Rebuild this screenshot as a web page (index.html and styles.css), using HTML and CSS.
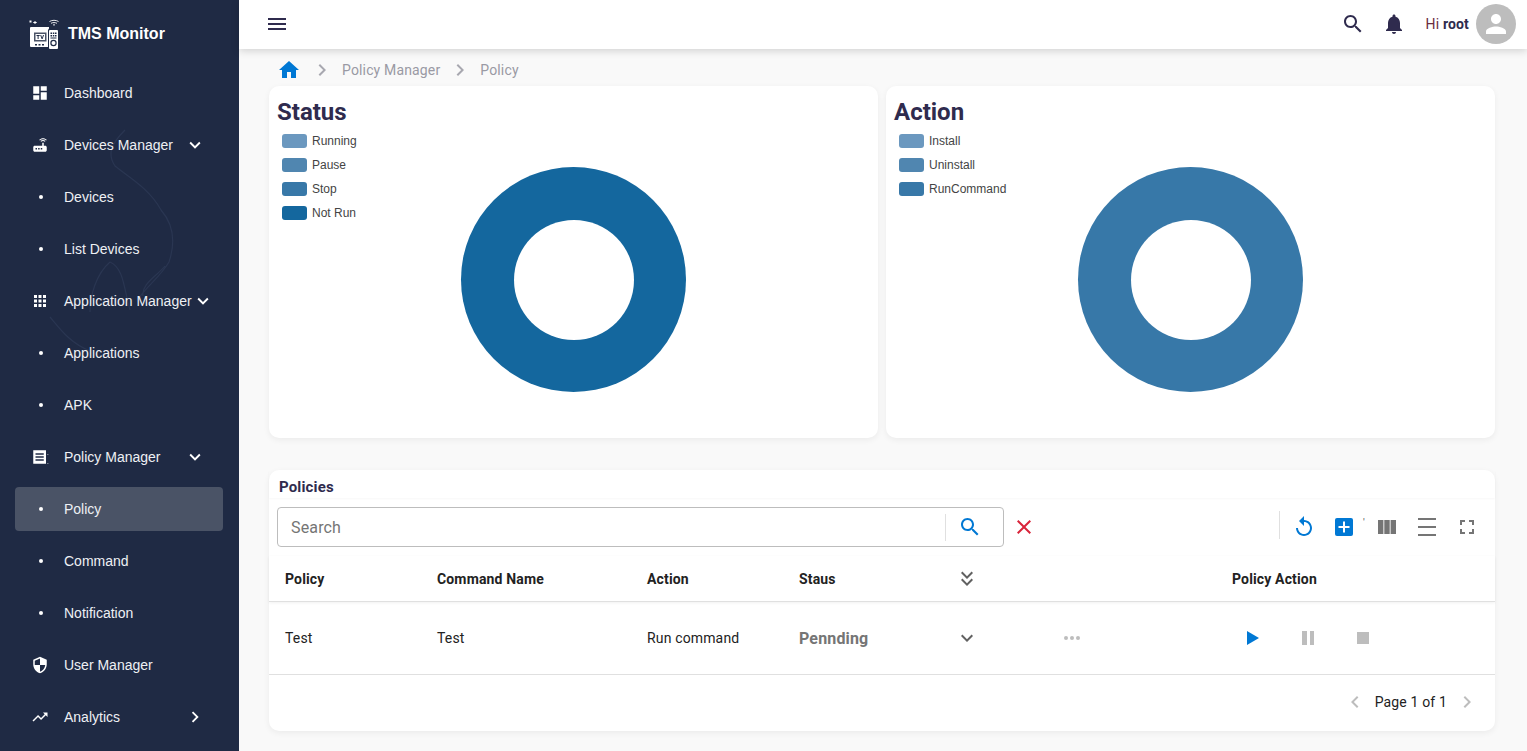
FILE: index.html
```html
<!DOCTYPE html>
<html lang="en">
<head>
<meta charset="utf-8">
<title>TMS Monitor</title>
<link rel="stylesheet" href="styles.css">
</head>
<body>
<div class="app">
  <aside class="sidebar">
    <svg class="side-art" viewBox="0 0 239 751" fill="none" stroke="#2a3652" stroke-width="1.2">
      <path d="M125 130c-14 14-18 24-10 36 12 10 34 22 46 44 14 16 14 34 8 52-8 14-22 24-30 36M110 262c-14 12-20 34-20 50M110 262c14 6 14 28 20 48M165 266c-8 10-24 18-22 30M50 317c10 12 20 26 40 34"/>
    </svg>
    <div class="brand">
      <svg class="brand-logo" viewBox="29 19 31 31" aria-hidden="true">
        <path fill="#fff" d="M29.500 20.500h2v2h-2zM34.500 21h1v1h1.200v1h-1.200v1h-1v-1h-1.200v-1h1.200z"/>
        <path fill="none" stroke="#fff" stroke-width=".9" d="M49.500 21.500c2.500-1.600 6.500-1.600 9 0M51 23.300c1.800-1 4.200-1 6 0M53 25c.6-.3 1.400-.3 2 0"/>
        <path fill="#fff" d="M30 28a1 1 0 0 1 1-1h18v1.500l-1 1.500v17H31a1 1 0 0 1-1-1z"/>
        <path fill="#4a5366" d="M34 32.500h12.500v9H34z"/>
        <path fill="#fff" d="M35.500 34h9.500v6h-9.500z"/>
        <path fill="#1f2a44" d="M36.500 35h3.200v.9h-1.100v3h-1v-3h-1.100zM40.200 35h1l.9 2.700.9-2.700h1l-1.400 3.900h-1zM35 44h2v1.500h-2zM38.500 44h2v1.500h-2zM42 44h2v1.500h-2z"/>
        <path fill="#fff" d="M50 30h7a1 1 0 0 1 1 1v17a1 1 0 0 1-1 1h-7a1 1 0 0 1-1-1V31a1 1 0 0 1 1-1z"/>
        <path fill="#1f2a44" d="M50.500 32.500h1.500V34h-1.500zM52.800 32.500h1.500V34h-1.500zM55 32.500h1.500V34H55zM50.500 35h1.500v1.500h-1.500zM52.800 35h1.500v1.500h-1.500zM55 35h1.500v1.500H55zM50.500 37.500h6v1h-6z"/>
        <circle cx="53.500" cy="43" r="2.600" fill="none" stroke="#1f2a44" stroke-width="1.200"/>
      </svg>
      <span class="brand-name">TMS Monitor</span>
    </div>
    <nav class="nav">
      <a class="nav-item"><span class="nav-icon"><svg viewBox="0 0 24 24"><path d="M3 13h8V3H3zm0 8h8v-6H3zm10 0h8V11h-8zm0-18v6h8V3z"/></svg></span><span class="nav-label">Dashboard</span></a>
      <a class="nav-item"><span class="nav-icon"><svg viewBox="0 0 24 24"><path d="M20.200 5.900l.8-.8C19.600 3.700 17.800 3 16 3s-3.600.7-5 2.100l.8.8C13 4.800 14.500 4.200 16 4.200s3 .6 4.200 1.700zm-.9.800c-.9-.9-2.100-1.400-3.300-1.400s-2.400.5-3.300 1.400l.8.8c.7-.7 1.600-1 2.500-1s1.800.3 2.500 1zM19 13h-2V9h-2v4H5c-1.100 0-2 .9-2 2v4c0 1.100.9 2 2 2h14c1.100 0 2-.9 2-2v-4c0-1.100-.9-2-2-2zM8 18H6v-2h2zm3.500 0h-2v-2h2zm3.500 0h-2v-2h2z"/></svg></span><span class="nav-label">Devices Manager</span><svg class="nav-chev" viewBox="0 0 24 24"><path d="M7.410 8.590 12 13.170l4.590-4.580L18 10l-6 6-6-6z"/></svg></a>
      <a class="nav-item"><span class="nav-icon"><i class="dot"></i></span><span class="nav-label">Devices</span></a>
      <a class="nav-item"><span class="nav-icon"><i class="dot"></i></span><span class="nav-label">List Devices</span></a>
      <a class="nav-item"><span class="nav-icon"><svg viewBox="0 0 24 24"><path d="M4 8h4V4H4zm6 12h4v-4h-4zm-6 0h4v-4H4zm0-6h4v-4H4zm6 0h4v-4h-4zm6-10v4h4V4zm-6 4h4V4h-4zm6 6h4v-4h-4zm0 6h4v-4h-4z"/></svg></span><span class="nav-label">Application Manager</span><svg class="nav-chev tight" viewBox="0 0 24 24"><path d="M7.410 8.590 12 13.170l4.590-4.580L18 10l-6 6-6-6z"/></svg></a>
      <a class="nav-item"><span class="nav-icon"><i class="dot"></i></span><span class="nav-label">Applications</span></a>
      <a class="nav-item"><span class="nav-icon"><i class="dot"></i></span><span class="nav-label">APK</span></a>
      <a class="nav-item"><span class="nav-icon"><svg viewBox="0 0 24 24"><path fill-rule="evenodd" d="M3 3h17v18H3zM6 7v2h11V7zM6 11v2h11v-2zM6 15v2h11v-2z"/><path d="M22 8h1v1h-1zM22 20h1v1h-1z"/></svg></span><span class="nav-label">Policy Manager</span><svg class="nav-chev" viewBox="0 0 24 24"><path d="M7.410 8.590 12 13.170l4.590-4.580L18 10l-6 6-6-6z"/></svg></a>
      <a class="nav-item active"><span class="nav-icon"><i class="dot"></i></span><span class="nav-label">Policy</span></a>
      <a class="nav-item"><span class="nav-icon"><i class="dot"></i></span><span class="nav-label">Command</span></a>
      <a class="nav-item"><span class="nav-icon"><i class="dot"></i></span><span class="nav-label">Notification</span></a>
      <a class="nav-item"><span class="nav-icon"><svg viewBox="0 0 24 24"><path d="M12 1 3 5v6c0 5.550 3.840 10.740 9 12 5.160-1.260 9-6.450 9-12V5zm0 10.990h7c-.53 4.120-3.280 7.790-7 8.940V12H5V6.300l7-3.110z"/></svg></span><span class="nav-label">User Manager</span></a>
      <a class="nav-item"><span class="nav-icon"><svg viewBox="0 0 24 24"><path d="m16 6 2.290 2.290-4.880 4.880-4-4L2 16.590 3.410 18l6-6 4 4 6.300-6.290L22 12V6z"/></svg></span><span class="nav-label">Analytics</span><svg class="nav-chev" viewBox="0 0 24 24"><path d="M10 6 8.590 7.410 13.170 12l-4.580 4.590L10 18l6-6z"/></svg></a>
    </nav>
  </aside>

  <div class="content">
    <header class="topbar">
      <svg class="menu-icon" viewBox="0 0 24 24"><path d="M3 18h18v-2H3zm0-5h18v-2H3zm0-7v2h18V6z"/></svg>
      <div class="top-right">
        <svg class="top-icon" viewBox="0 0 24 24"><path d="M15.500 14h-.79l-.28-.27C15.410 12.590 16 11.110 16 9.500 16 5.910 13.090 3 9.500 3S3 5.910 3 9.500 5.910 16 9.500 16c1.610 0 3.090-.59 4.230-1.570l.27.28v.79l5 4.990L20.490 19zm-6 0C7.010 14 5 11.990 5 9.500S7.010 5 9.500 5 14 7.010 14 9.500 11.990 14 9.500 14z"/></svg>
        <svg class="top-icon" viewBox="0 0 24 24"><path d="M12 22c1.100 0 2-.9 2-2h-4c0 1.100.89 2 2 2zm6-6v-5c0-3.070-1.640-5.640-4.500-6.320V4c0-.83-.67-1.500-1.500-1.500s-1.500.67-1.500 1.500v.68C7.630 5.360 6 7.920 6 11v5l-2 2v1h16v-1z"/></svg>
        <span class="greeting">Hi <b>root</b></span>
        <span class="avatar"><svg viewBox="0 0 24 24"><path d="M12 12c2.210 0 4-1.790 4-4s-1.790-4-4-4-4 1.790-4 4 1.790 4 4 4zm0 2c-2.670 0-8 1.340-8 4v2h16v-2c0-2.660-5.330-4-8-4z"/></svg></span>
      </div>
    </header>

    <main class="main">
      <div class="crumbs">
        <svg class="crumb-home" viewBox="0 0 24 24"><path d="M10 20v-6h4v6h5v-8h3L12 3 2 12h3v8z"/></svg>
        <svg class="crumb-sep" viewBox="0 0 24 24"><path d="M10 6 8.590 7.410 13.170 12l-4.580 4.590L10 18l6-6z"/></svg>
        <span>Policy Manager</span>
        <svg class="crumb-sep" viewBox="0 0 24 24"><path d="M10 6 8.590 7.410 13.170 12l-4.580 4.590L10 18l6-6z"/></svg>
        <span>Policy</span>
      </div>

      <section class="charts">
        <article class="chart-card">
          <h2 class="chart-title">Status</h2>
          <ul class="legend">
            <li><i class="swatch c1"></i>Running</li>
            <li><i class="swatch c2"></i>Pause</li>
            <li><i class="swatch c3"></i>Stop</li>
            <li><i class="swatch c4"></i>Not Run</li>
          </ul>
          <div class="donut d-status"></div>
        </article>
        <article class="chart-card">
          <h2 class="chart-title">Action</h2>
          <ul class="legend">
            <li><i class="swatch c1"></i>Install</li>
            <li><i class="swatch c2"></i>Uninstall</li>
            <li><i class="swatch c3"></i>RunCommand</li>
          </ul>
          <div class="donut d-action"></div>
        </article>
      </section>

      <section class="table-card">
        <h3 class="table-title">Policies</h3>
        <div class="toolbar">
          <div class="search">
            <span class="search-text">Search</span>
            <i class="search-div"></i>
            <svg class="search-btn" viewBox="0 0 24 24"><path d="M15.500 14h-.79l-.28-.27C15.410 12.590 16 11.110 16 9.500 16 5.910 13.090 3 9.500 3S3 5.910 3 9.500 5.910 16 9.500 16c1.610 0 3.090-.59 4.230-1.570l.27.28v.79l5 4.990L20.490 19zm-6 0C7.010 14 5 11.990 5 9.500S7.010 5 9.500 5 14 7.010 14 9.500 11.990 14 9.500 14z"/></svg>
          </div>
          <svg class="clear" viewBox="0 0 24 24"><path d="M19 6.410 17.590 5 12 10.590 6.410 5 5 6.410 10.590 12 5 17.590 6.410 19 12 13.410 17.590 19 19 17.590 13.410 12z"/></svg>
          <div class="tools">
            <i class="tool-div"></i>
            <svg class="tool refresh" viewBox="0 0 24 24"><path d="M12 5V1L7 6l5 5V7c3.310 0 6 2.690 6 6s-2.690 6-6 6-6-2.690-6-6H4c0 4.420 3.580 8 8 8s8-3.580 8-8-3.580-8-8-8z"/></svg>
            <span class="add"><svg viewBox="0 0 18 18"><path d="M8 3.500h2V8h4.500v2H10v4.500H8V10H3.500V8H8z"/></svg></span>
            <span class="tick">'</span>
            <svg class="tool cols" viewBox="0 0 18 14"><path d="M0 0h5.400v14H0zM6.300 0h5.400v14H6.300zM12.600 0H18v14h-5.400z"/></svg>
            <svg class="tool rows" viewBox="0 0 18 18"><path d="M0 0h18v2H0zM0 8h18v2H0zM0 16h18v2H0z"/></svg>
            <svg class="tool full" viewBox="0 0 14 14"><path d="M0 0h5v2H2v3H0zM9 0h5v5h-2V2H9zM0 9h2v3h3v2H0zM12 9h2v5H9v-2h3z"/></svg>
          </div>
        </div>
        <div class="row head">
          <span>Policy</span><span>Command Name</span><span>Action</span><span>Staus</span>
          <svg class="icon-expand double" viewBox="0 0 24 24"><path d="M16.590 3.590 12 8.170 7.410 3.590 6 5l6 6 6-6z"/><path d="M16.590 10.590 12 15.170l-4.590-4.580L6 12l6 6 6-6z"/></svg>
          <span></span><span>Policy Action</span>
        </div>
        <div class="row body">
          <span>Test</span><span>Test</span><span>Run command</span><span class="state">Pennding</span>
          <svg class="icon-expand" viewBox="0 0 24 24"><path d="M7.410 8.590 12 13.170l4.590-4.580L18 10l-6 6-6-6z"/></svg>
          <svg class="dots" viewBox="0 0 18 6"><circle cx="3" cy="3" r="2"/><circle cx="9" cy="3" r="2"/><circle cx="15" cy="3" r="2"/></svg>
          <div class="actions">
            <svg class="act play" viewBox="0 0 12 14"><path d="M0 0v14l12-7z"/></svg>
            <svg class="act" viewBox="0 0 12 14"><path d="M0 0h5v14H0zM8 0h4.500v14H8z"/></svg>
            <svg class="act" viewBox="0 0 12 14"><path d="M0 1h12v12H0z"/></svg>
          </div>
        </div>
        <div class="pager">
          <svg class="pager-arrow" viewBox="0 0 24 24"><path d="M15.410 7.410 14 6l-6 6 6 6 1.410-1.410L10.830 12z"/></svg>
          <span>Page 1 of 1</span>
          <svg class="pager-arrow" viewBox="0 0 24 24"><path d="M10 6 8.590 7.410 13.170 12l-4.580 4.590L10 18l6-6z"/></svg>
        </div>
      </section>
    </main>
  </div>
</div>
</body>
</html>
```
FILE: styles.css
```css
* { box-sizing: border-box; }
html, body { margin: 0; height: 100%; overflow: hidden; }
body { font-family: Roboto, "Liberation Sans", sans-serif; font-size: 14px; letter-spacing: .15px; color: #222; background: #f9f9f9; }
svg { display: block; flex: none; }

.app { display: flex; height: 751px; }

.sidebar { position: relative; width: 239px; flex: none; background: #1f2a44; color: #fff; overflow: hidden; padding-top: 15px; font-family: "Liberation Sans", Arial, sans-serif; letter-spacing: 0; }
.side-art { position: absolute; left: 0; top: 0; width: 239px; height: 751px; }
.brand { position: relative; display: flex; align-items: center; height: 38px; padding-left: 29px; }
.brand-logo { width: 31px; height: 31px; margin-right: 8px; }
.brand-name { font-size: 16px; font-weight: 700; }
.nav { position: relative; display: flex; flex-direction: column; gap: 8px; padding: 18px 16px 0 15px; }
.nav-item { display: flex; align-items: center; height: 44px; padding-left: 16px; border-radius: 4px; color: #eef0f4; font-size: 14px; }
.nav-item.active { background: #4a5366; }
.nav-icon { width: 33px; flex: none; display: flex; align-items: center; }
.nav-icon svg { width: 18px; height: 18px; fill: #fff; }
.dot { width: 4px; height: 4px; border-radius: 50%; background: #fff; margin-left: 8px; }
.nav-label { white-space: nowrap; }
.nav-chev { width: 22px; height: 22px; fill: #fff; margin-left: auto; margin-right: 17px; }
.nav-chev.tight { margin-right: 9px; }

.content { flex: 1; min-width: 0; display: flex; flex-direction: column; }
.topbar { position: relative; z-index: 1; flex: none; display: flex; align-items: center; height: 49px; background: #fff; padding: 0 11px 1px 26px; box-shadow: 0 2px 8px rgba(0,0,0,.16); }
.menu-icon { width: 24px; height: 24px; fill: #2f2b4e; }
.top-right { margin-left: auto; display: flex; align-items: center; }
.top-icon { width: 24px; height: 24px; fill: #2f2b4e; margin-right: 17px; }
.greeting { font-size: 14px; color: #6a2c3e; margin-left: 3px; margin-right: 7px; white-space: nowrap; }
.greeting b { color: #2f2b4e; font-weight: 700; }
.avatar { display: flex; align-items: center; justify-content: center; width: 40px; height: 40px; border-radius: 50%; background: #bdbdbd; }
.avatar svg { width: 30px; height: 30px; fill: #fff; }

.main { flex: 1; padding: 0 32px 0 30px; display: flex; flex-direction: column; }
.crumbs { display: flex; align-items: center; height: 37px; padding: 5px 0 0 8px; color: #9a9aa4; font-size: 14px; }
.crumb-home { width: 24px; height: 24px; fill: #0078d4; margin-right: 9px; }
.crumb-sep { width: 24px; height: 24px; fill: #a8a8b0; margin-right: 8px; }
.crumbs span + .crumb-sep { margin-left: 8px; }

.charts { display: grid; grid-template-columns: 609px 609px; gap: 8px; }
.chart-card { position: relative; height: 352px; background: #fff; border-radius: 10px; box-shadow: 0 2px 6px rgba(0,0,0,.06); padding: 10px 8px; }
.chart-title { margin: 0; font-size: 24px; font-weight: 700; line-height: 32px; letter-spacing: 0; color: #2f2b4e; }
.legend { list-style: none; margin: 1px 0 0 5px; padding: 0; font-family: "Liberation Sans", Arial, sans-serif; letter-spacing: 0; }
.legend li { display: flex; align-items: center; height: 24px; font-size: 12px; color: #444; }
.swatch { width: 25px; height: 14px; border-radius: 3px; margin-right: 5px; }
.c1 { background: #6b98bf; }
.c2 { background: #5086b0; }
.c3 { background: #3878a8; }
.c4 { background: #14679e; }
.donut { position: absolute; left: 192px; top: 81px; width: 225px; height: 225px; border-radius: 50%; }
.donut::after { content: ""; position: absolute; left: 52.500px; top: 52.500px; width: 120px; height: 120px; border-radius: 50%; background: #fff; }
.d-status { background: #14679e; }
.d-action { background: #3778a8; }

.table-card { margin-top: 32px; height: 261px; background: #fff; border-radius: 10px; box-shadow: 0 2px 6px rgba(0,0,0,.06); }
.table-title { margin: 0; height: 28px; padding: 9px 10px 0; font-size: 15px; line-height: 16px; font-weight: 700; color: #2f2b4e; box-shadow: 0 1px 2px rgba(0,0,0,.03); }
.toolbar { display: flex; align-items: center; height: 58px; padding: 0 0 0 8px; }
.search { display: flex; align-items: center; width: 727px; height: 40px; border: 1px solid #bdbdbd; border-radius: 4px; padding-left: 13px; }
.search-text { flex: 1; font-size: 16px; color: #757575; }
.search-div { width: 1px; height: 27px; background: #e0e0e0; }
.search-btn { width: 24px; height: 24px; fill: #0078d4; margin: 0 21px 0 12px; }
.clear { width: 24px; height: 24px; fill: #d9243a; margin-left: 8px; }
.tools { margin-left: auto; display: flex; align-items: center; height: 36px; margin-right: 21px; }
.tool-div { width: 1px; height: 28px; background: #e0e0e0; margin: 0 12px 4px 0; }
.tool { fill: #757575; }
.refresh { width: 24px; height: 24px; fill: #0078d4; }
.add { display: flex; width: 18px; height: 18px; margin-left: 19px; background: #0078d4; border-radius: 2px; }
.add svg { width: 18px; height: 18px; fill: #fff; }
.tick { width: 25px; font-size: 10px; line-height: 10px; color: #555; padding-left: 10px; margin-bottom: 8px; }
.cols { width: 18px; height: 14px; }
.rows { width: 18px; height: 18px; margin-left: 22px; }
.full { width: 14px; height: 14px; margin-left: 24px; }

.row { display: grid; grid-template-columns: 152px 210px 152px 152px 40px 241px 1fr; align-items: center; padding-left: 16px; border-bottom: 1px solid #e0e0e0; }
.head { height: 46px; font-weight: 700; color: #222; box-shadow: 0 1px 3px rgba(0,0,0,.06); }
.head > span { white-space: nowrap; }
.body { height: 73px; color: #222; }
.state { font-size: 16px; font-weight: 700; color: #757575; }
.icon-expand { width: 24px; height: 24px; fill: #616161; margin-left: 4px; }
.icon-expand.double { margin-top: 3px; }
.dots { width: 18px; height: 6px; fill: #bdbdbd; margin-left: 72px; }
.actions { display: flex; align-items: center; gap: 43px; margin-left: 15px; }
.act { width: 12px; height: 14px; fill: #bdbdbd; }
.play { fill: #0078d4; }
.pager { display: flex; align-items: center; justify-content: flex-end; height: 54px; padding-right: 16px; gap: 8px; }
.pager-arrow { width: 24px; height: 24px; fill: #bdbdbd; }
```
